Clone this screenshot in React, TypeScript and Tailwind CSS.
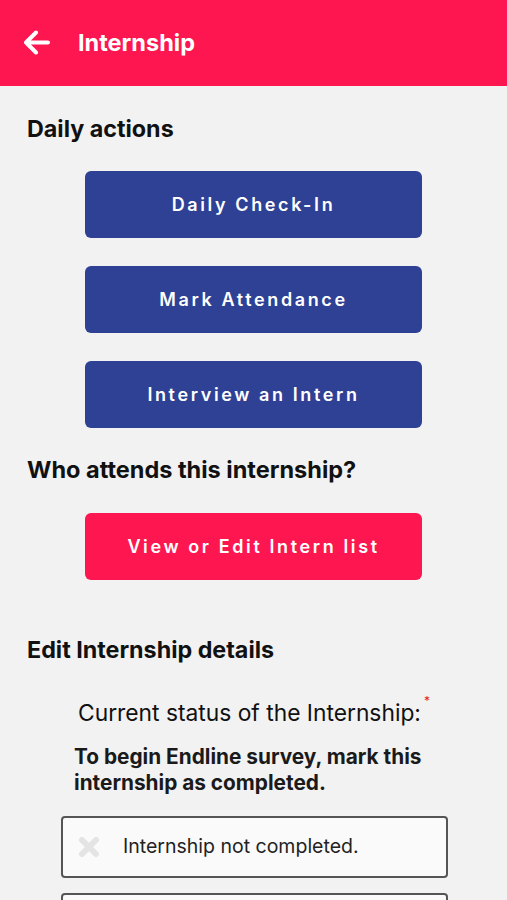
import React from "react";

const font = { fontFamily: "Inter, 'Noto Sans', 'Liberation Sans', sans-serif" };

function ActionButton({ label, color }: { label: string; color: string }) {
  return (
    <div className="flex justify-center">
      <button
        className={`w-[337px] h-[67px] rounded-[6px] ${color} text-white text-[18px] font-semibold tracking-[0.145em] flex items-center justify-center`}
      >
        {label}
      </button>
    </div>
  );
}

export default function App() {
  return (
    <div className="w-[507px] h-[900px] overflow-hidden bg-[#f2f2f2] text-[#111]" style={font}>
      <header className="h-[86px] bg-[#fe1650] flex items-center pl-[23px]">
        <svg width="27" height="25" viewBox="0 0 27 25" fill="none" className="mt-[-2px]">
          <path d="M25 12.5H3.5M13 2.5L3 12.5L13 22.5" stroke="white" strokeWidth="4" strokeLinecap="round" strokeLinejoin="round" />
        </svg>
        <h1 className="ml-[28px] text-white text-[23.5px] font-bold leading-[30px]">Internship</h1>
      </header>

      <div className="px-[27px]">
        <h2 className="text-[23.3px] font-bold mt-[28px] leading-[30px]">Daily actions</h2>
        <div className="flex flex-col gap-[28px] mt-[27px]">
          <ActionButton label="Daily Check-In" color="bg-[#2e4195]" />
          <ActionButton label="Mark Attendance" color="bg-[#2e4195]" />
          <ActionButton label="Interview an Intern" color="bg-[#2e4195]" />
        </div>

        <h2 className="text-[23.5px] font-bold mt-[27px] leading-[30px]">Who attends this internship?</h2>
        <div className="mt-[28px]">
          <ActionButton label="View or Edit Intern list" color="bg-[#fe1650]" />
        </div>

        <h2 className="text-[23.3px] font-bold mt-[55px] leading-[30px]">Edit Internship details</h2>

        <div className="mt-[33px] pl-[51px] flex items-start">
          <span className="text-[22.8px] leading-[30px] text-[#111]">Current status of the Internship:</span>
          <span className="text-[#e0202a] text-[12px] leading-none ml-[3px] mt-[-3px]">*</span>
        </div>

        <p className="mt-[16px] pl-[47px] pr-[10px] text-[20.8px] font-bold leading-[26px] text-[#1a1a1a]">
          To begin Endline survey, mark this internship as completed.
        </p>

        <div className="mt-[20px] ml-[34px] w-[387px] h-[62px] rounded-[4px] border-[2px] border-[#555] bg-[#fafafa] flex items-center">
          <svg width="22" height="20" viewBox="0 0 22 20" className="ml-[15px]">
            <path d="M4 3L18 17M18 3L4 17" stroke="#e4e4e4" strokeWidth="6" strokeLinecap="round" />
          </svg>
          <span className="ml-[23px] text-[19.5px] text-[#222]">Internship not completed.</span>
        </div>

        <div className="mt-[15px] ml-[34px] w-[387px] h-[62px] rounded-[4px] border-[2px] border-[#555] bg-[#fafafa]" />
      </div>
    </div>
  );
}
